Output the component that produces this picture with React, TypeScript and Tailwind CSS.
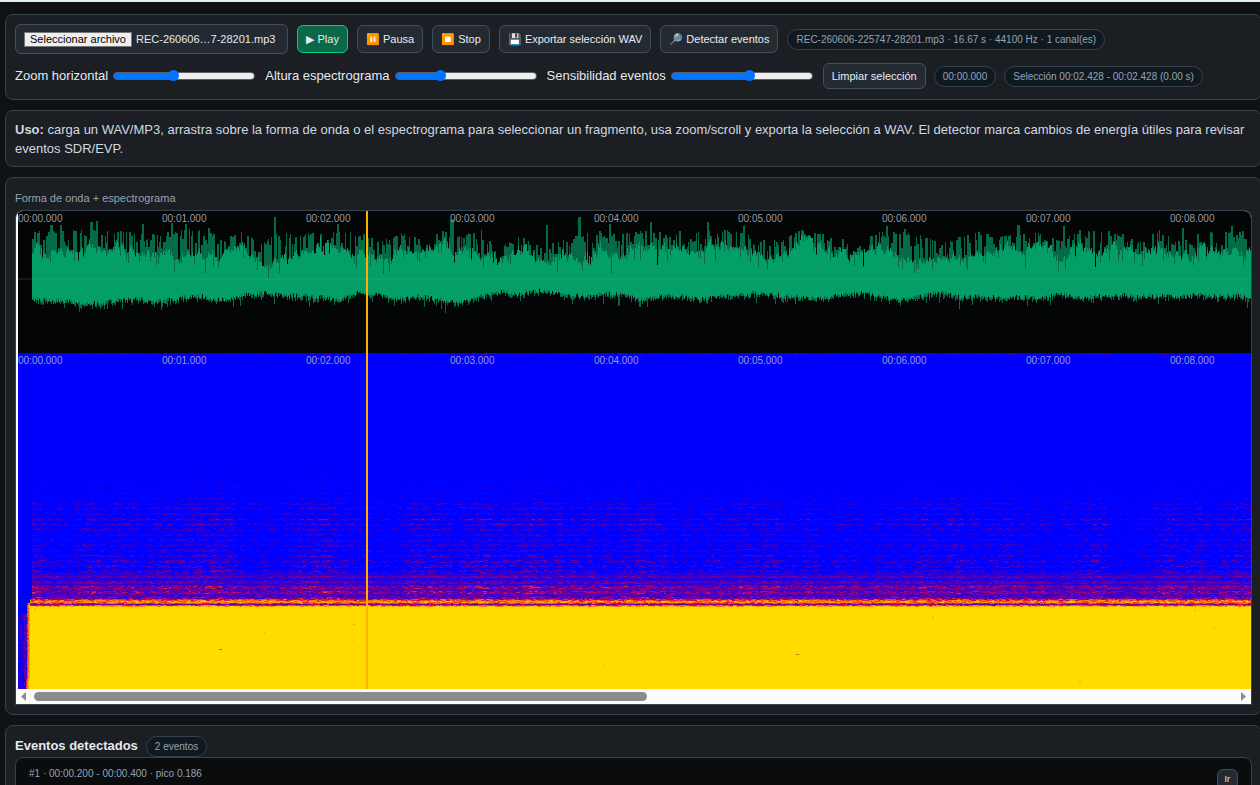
import { useMemo, useState } from "react";
import type { ReactNode } from "react";

const PX_PER_SECOND = 144;
const VIEW_WIDTH = 1234;
const WAVE_HEIGHT = 142;
const SPEC_HEIGHT = 336;
const AUDIO_START = 14;
const PLAYHEAD = 348;

// [solid top, peak top, solid bottom], one entry every 20px
const ENVELOPE: [number, number, number][] = [
  [39, 21, 90], [39, 21, 91], [37, 19, 94], [37, 21, 94], [36, 21, 91], [39, 24, 90],
  [42, 24, 92], [44, 19, 89], [41, 19, 87], [44, 26, 91], [32, 21, 87], [52, 34, 84],
  [49, 21, 86], [41, 24, 87], [31, 22, 88], [42, 22, 91], [41, 22, 83], [47, 31, 86],
  [34, 22, 90], [41, 29, 87], [29, 19, 91], [41, 26, 93], [41, 19, 87], [49, 37, 83],
  [37, 26, 85], [51, 37, 81], [42, 31, 85], [49, 24, 87], [37, 21, 85], [44, 24, 84],
  [36, 21, 90], [37, 21, 87], [34, 21, 87], [42, 22, 90], [31, 19, 87], [37, 22, 86],
  [44, 27, 84], [46, 31, 87], [27, 19, 88], [32, 24, 89], [41, 26, 86], [44, 31, 84],
  [36, 21, 87], [42, 22, 91], [49, 24, 87], [47, 34, 83], [42, 26, 88], [42, 22, 87],
  [37, 26, 89], [37, 24, 88], [32, 22, 89], [47, 31, 85], [32, 19, 89], [44, 22, 87],
  [31, 19, 86], [44, 31, 87], [34, 19, 87], [47, 32, 87], [37, 22, 86], [37, 22, 87],
  [41, 21, 86], [37, 21, 91], [32, 24, 91], [32, 24, 91],
];

const SPIKES: Record<number, number> = {
  32: 14, 42: 14, 72: 11, 78: 10, 124: 13, 153: 12, 167: 13, 190: 17, 256: 6, 319: 13,
  432: 9, 434: 8, 528: 14, 560: 6, 591: 13, 632: 11, 689: 11, 725: 15, 868: 15,
  886: 18, 999: 14, 1045: 15, 1164: 17, 1213: 15,
};

const HEAT = [
  "#1500ea", "#2a00d6", "#4000c4", "#5500b0", "#6e00a0", "#880090", "#a20078",
  "#c00860", "#dc2440", "#f24422", "#ff6410", "#ff8408", "#ffa400", "#ffc400",
];

function makeRandom(seed: number) {
  let s = seed;
  return () => {
    s = (s + 0x6d2b79f5) | 0;
    let t = Math.imul(s ^ (s >>> 15), 1 | s);
    t = (t + Math.imul(t ^ (t >>> 7), 61 | t)) ^ t;
    return ((t ^ (t >>> 14)) >>> 0) / 4294967296;
  };
}

function envelopeAt(x: number, k: 0 | 1 | 2) {
  const pos = Math.max(0, (x - 2) / 20 - 1);
  const i = Math.min(ENVELOPE.length - 2, Math.floor(pos));
  const f = Math.min(1, pos - i);
  return ENVELOPE[i][k] * (1 - f) + ENVELOPE[i + 1][k] * f;
}

function buildWave() {
  const rnd = makeRandom(7);
  let solid = "";
  let faint = "";
  let drift = 0;
  let peak = 0;
  let hold = 0;
  for (let x = AUDIO_START; x < VIEW_WIDTH; x++) {
    drift = drift * 0.65 + (rnd() - 0.5) * 9;
    let top = envelopeAt(x, 0) + 1 + drift;
    if (rnd() < 0.16) top += rnd() * 14;
    if (hold > 0) {
      hold--;
    } else {
      const high = envelopeAt(x, 1) - 1;
      const reach = rnd();
      peak = rnd() < 0.62 ? high + reach * reach * 16 : top - rnd() * 3;
      hold = rnd() < 0.45 ? 1 : 0;
    }
    if (SPIKES[x] ?? SPIKES[x - 1]) peak = SPIKES[x] ?? SPIKES[x - 1];
    if (x < AUDIO_START + 2) top = 42;
    const bottom = envelopeAt(x, 2) - 2 + (rnd() - 0.5) * 5;
    const low = bottom + rnd() * 4 + (rnd() < 0.08 ? rnd() * 8 : 0);
    const t = Math.round(top);
    const p = Math.round(Math.min(peak, top));
    solid += `M${x} ${t}h1V${Math.round(bottom)}h-1z`;
    faint += `M${x} ${p}h1V${Math.round(low)}h-1z`;
  }
  return { solid, faint };
}

// mean heat of a spectrogram row, 0 (blue) to 1 (yellow)
function rowHeat(y: number) {
  if (y < 2) return 0.07;
  if (y < 8) return 0.015;
  if (y < 110) return 0.002;
  if (y >= 246) {
    return [0.56, 0.7, 0.8, 0.8, 0.62, 0.36, 0.64, 0.92][Math.min(7, y - 246)];
  }
  if (y === 166 || y === 171) return 0.17;
  const phase = Math.abs(((y - 166 + 520) % 5.25) - 2.6) / 2.6;
  const line = phase > 0.45 ? 1 : 0.25;
  if (y < 150) return 0.035 * line * ((y - 110) / 40);
  if (y < 200) return 0.075 * line;
  if (y < 220) return 0.13 * line;
  if (y < 232) return 0.24 * (line * 0.7 + 0.3);
  return 0.34 * (line * 0.4 + 0.6);
}

function buildSpectrogram() {
  const rnd = makeRandom(31);
  const paths = HEAT.map(() => "");
  const put = (x: number, y: number, w: number, heat: number) => {
    const i = Math.min(HEAT.length - 1, Math.floor(heat * HEAT.length));
    if (i >= 0 && heat > 0.035) paths[i] += `M${x} ${y}h${w}v1h-${w}z`;
  };
  const loud: number[] = [];
  let level = 1;
  for (let x = 0; x < VIEW_WIDTH; x += 8) {
    level = level * 0.6 + (0.2 + rnd() * 1.6) * 0.4;
    loud.push(level);
  }
  for (let y = 0; y < 254; y++) {
    const mean = rowHeat(y);
    let x = y >= 246 ? 12 : AUDIO_START;
    while (x < VIEW_WIDTH) {
      const w = 1 + Math.floor(rnd() * 4);
      const gain = loud[Math.floor(x / 8)] ?? 1;
      let heat = mean;
      if (y >= 246) heat = mean + (rnd() - 0.5) * 0.34;
      else if (y >= 220) heat = mean * (0.35 + rnd() * 1.25) * (0.6 + gain * 0.4);
      else heat = rnd() < 0.5 * gain ? mean * (0.3 + rnd() * 1.7) * gain : 0;
      if (y < 2 && rnd() < 0.6) heat = 0;
      put(x, y, w, Math.max(0, heat));
      x += w;
    }
  }
  // onset before the signal starts
  for (let y = 260; y < SPEC_HEIGHT; y++) {
    for (let x = 0; x < 9; x++) put(x, y, 1, rnd() * (x > 5 ? 0.4 : 0.16));
  }
  for (let y = 250; y < SPEC_HEIGHT; y++) {
    const edge = y > 325 ? 8 : 9;
    put(edge, y, 1, 0.5 + rnd() * 0.25);
    put(edge + 1, y, 1, 0.68 + rnd() * 0.2);
    put(edge + 2, y, 1, 0.84 + rnd() * 0.15);
  }
  return paths;
}

const SPECKS = [
  [201, 296, 3], [335, 271, 2], [335, 287, 1], [246, 279, 1], [778, 301, 3], [586, 311, 1],
  [1176, 257, 2], [914, 264, 2], [1195, 275, 2], [1061, 328, 2], [12, 311, 1], [16, 256, 2],
];

function Panel({ className, children }: { className: string; children: ReactNode }) {
  return (
    <section className={`rounded-lg border border-[#36424c] bg-[#1b1e23] px-[9px] pt-[9px] ${className}`}>
      {children}
    </section>
  );
}

function Pill({ children }: { children: ReactNode }) {
  return (
    <span className="rounded-full border border-[#36424c] bg-[#111920] px-2 text-[10px] leading-[19px] text-[#94a3b0]">
      {children}
    </span>
  );
}

function Button({ primary, compact, children }: { primary?: boolean; compact?: boolean; children: ReactNode }) {
  return (
    <button
      type="button"
      className={`rounded-md border px-2 text-[11px] leading-4 text-[#e8edf2] ${compact ? "py-1" : "py-[5px]"} ${
        primary ? "border-[#00d084] bg-[#0b6848]" : "border-[#43505b] bg-[#242a31]"
      }`}
    >
      {children}
    </button>
  );
}

function Slider({ id, label, initial }: { id: string; label: string; initial: number }) {
  const [value, setValue] = useState(initial);
  return (
    <div className="flex items-center gap-[5px] pr-0.5">
      <label htmlFor={id} className="text-[13px] leading-5">{label}</label>
      <input
        id={id}
        type="range"
        min={0}
        max={100}
        value={value}
        onChange={(e) => setValue(Number(e.target.value))}
        className="h-[11px] w-[142px] appearance-none bg-transparent [&::-webkit-slider-runnable-track]:h-2 [&::-webkit-slider-runnable-track]:rounded-full [&::-webkit-slider-runnable-track]:border [&::-webkit-slider-runnable-track]:border-[#5c6066] [&::-webkit-slider-runnable-track]:bg-[image:var(--fill)] [&::-webkit-slider-thumb]:-mt-[3px] [&::-webkit-slider-thumb]:size-[11px] [&::-webkit-slider-thumb]:appearance-none [&::-webkit-slider-thumb]:rounded-full [&::-webkit-slider-thumb]:bg-[#0075ff]"
        style={{ ["--fill" as string]: `linear-gradient(to right, #0075ff ${value}%, #efefef ${value}%)` }}
      />
    </div>
  );
}

function TimeTicks() {
  return (
    <>
      {Array.from({ length: 9 }, (_, i) => (
        <text key={i} x={i * PX_PER_SECOND} y={11} fontSize={10} fill="#b4bac0" fillOpacity={0.85}>
          {`00:0${i}.000`}
        </text>
      ))}
    </>
  );
}

function Waveform() {
  const { solid, faint } = useMemo(buildWave, []);
  return (
    <svg width={VIEW_WIDTH} height={WAVE_HEIGHT} className="block bg-[#040507]" aria-label="Forma de onda">
      <g shapeRendering="crispEdges">
        <rect x={0} y={67} width={VIEW_WIDTH} height={2} fill="#17191c" />
        <path d={faint} fill="#056b47" />
        <path d={solid} fill="#049f66" />
        <rect x={AUDIO_START} y={67} width={VIEW_WIDTH} height={2} fill="#0ba46b" />
      </g>
      <TimeTicks />
      <rect x={PLAYHEAD} y={0} width={2} height={WAVE_HEIGHT} fill="#ffb000" />
    </svg>
  );
}

function Spectrogram() {
  const paths = useMemo(buildSpectrogram, []);
  return (
    <svg width={VIEW_WIDTH} height={SPEC_HEIGHT} className="block bg-[#0000ff]" aria-label="Espectrograma">
      <g shapeRendering="crispEdges">
        <rect x={11} y={253} width={VIEW_WIDTH} height={83} fill="#ffdc00" />
        {paths.map((d, i) => (
          <path key={HEAT[i]} d={d} fill={HEAT[i]} />
        ))}
        {SPECKS.map(([x, y, w]) => (
          <rect key={`${x}-${y}`} x={x} y={y} width={w} height={1} fill={w > 2 ? "#c87800" : "#f0a800"} />
        ))}
      </g>
      <TimeTicks />
      <rect x={PLAYHEAD} y={0} width={2} height={SPEC_HEIGHT} fill="#ffb000" />
    </svg>
  );
}

export default function App() {
  return (
    <div className="h-screen overflow-hidden border-t-2 border-[#e2eeee] bg-[#101113] font-['Liberation_Sans',Arial,sans-serif] text-[#e5e9ee]">
      <main className="-mr-0.5 flex flex-col gap-2.5 pt-3 pl-[5px]">
        <Panel className="flex flex-wrap items-center gap-[9px] pb-2.5">
          <label
            htmlFor="archivo"
            className="flex h-[30px] items-center gap-1 rounded-md border border-[#43505b] bg-[#242a31] px-2 text-[11px]"
          >
            <span className="border border-[#767676] bg-[#efefef] px-[5px] leading-[13px] text-black">
              Seleccionar archivo
            </span>
            <span className="pr-1">REC-260606…7-28201.mp3</span>
            <input id="archivo" type="file" accept="audio/*" className="sr-only" />
          </label>
          <Button primary>▶ Play</Button>
          <Button>⏸️ Pausa</Button>
          <Button>⏹️ Stop</Button>
          <Button>💾 Exportar selección WAV</Button>
          <Button>🔎 Detectar eventos</Button>
          <Pill>REC-260606-225747-28201.mp3 · 16.67 s · 44100 Hz · 1 canal(es)</Pill>
          <div className="flex w-full items-center gap-2">
            <Slider id="zoom" label="Zoom horizontal" initial={42} />
            <Slider id="altura" label="Altura espectrograma" initial={31} />
            <Slider id="sensibilidad" label="Sensibilidad eventos" initial={56} />
            <Button compact>Limpiar selección</Button>
            <Pill>00:00.000</Pill>
            <Pill>Selección 00:02.428 - 00:02.428 (0.00 s)</Pill>
          </div>
        </Panel>

        <Panel className="pb-2">
          <p className="text-[13px] leading-[19px] text-[#d0d8e0]">
            <b>Uso:</b> carga un WAV/MP3, arrastra sobre la forma de onda o el espectrograma para seleccionar un
            fragmento, usa zoom/scroll y exporta la selección a WAV. El detector marca cambios de energía útiles para
            revisar eventos SDR/EVP.
          </p>
        </Panel>

        <Panel className="pb-[9px]">
          <h2 className="text-[11px] leading-[23px] text-[#94a3b0]">Forma de onda + espectrograma</h2>
          <div className="overflow-hidden rounded-t-lg border border-[#36424c] bg-[#fcfcfc]">
            <div className="overflow-hidden pl-0.5">
              <Waveform />
              <Spectrogram />
            </div>
            <div className="flex h-[15px] items-center gap-2 px-[5px]">
              <svg width="5" height="9" viewBox="0 0 5 9" fill="#8b8b8b">
                <path d="M5 0v9L0 4.5z" />
              </svg>
              <div className="h-[9px] w-1/2 rounded-full bg-[#8b8b8b]" />
              <svg width="5" height="9" viewBox="0 0 5 9" fill="#8b8b8b" className="ml-auto">
                <path d="M0 0v9l5-4.5z" />
              </svg>
            </div>
          </div>
        </Panel>

        <Panel className="pb-[9px]">
          <div className="flex h-[22px] items-center gap-2">
            <h2 className="text-[13px] font-bold">Eventos detectados</h2>
            <Pill>2 eventos</Pill>
          </div>
          <div className="flex items-start justify-between rounded-lg border border-[#36424c] bg-[#0b0c0e] px-[13px] pt-[11px] pb-4">
            <span className="text-[10px] leading-none text-[#94a3b0]">#1 · 00:00.200 - 00:00.400 · pico 0.186</span>
            <button
              type="button"
              className="rounded-md border border-[#43505b] bg-[#242a31] px-[7px] text-[9px] leading-[18px]"
            >
              Ir
            </button>
          </div>
        </Panel>
      </main>
    </div>
  );
}
